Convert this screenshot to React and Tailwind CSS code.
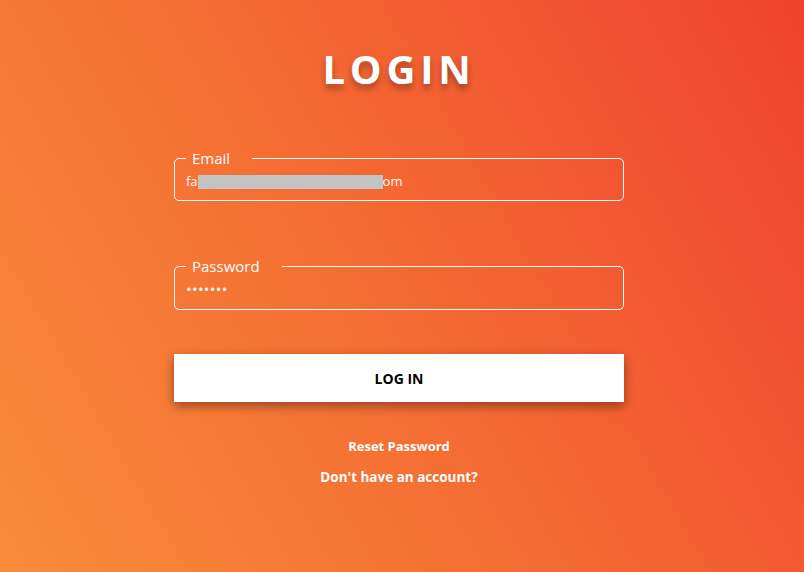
export default function App() {
  return (
    <div className="flex h-[572px] w-full flex-col items-center bg-[linear-gradient(60deg,#f88c39_0%,#f46a33_50%,#ef422e_100%)] pr-[6px] font-['Open_Sans',sans-serif] text-white">
      <h1 className="mt-[44px] text-[40px] leading-[50px] font-bold tracking-[0.12em] [text-shadow:0_5px_6px_rgba(0,0,0,0.3)]">
        LOGIN
      </h1>

      <form className="mt-[55px] flex w-[450px] flex-col">
        <fieldset className="rounded-[5px] border border-white px-[11px] pb-[7px]">
          <legend className="pr-[22px] pl-[6px] text-[15px] leading-[18px]">Email</legend>
          <div className="flex h-[26px] items-center pt-[3px] text-[13px]">
            <span>fa</span>
            <span className="h-[14px] w-[185px] bg-[#c3c3c3]" />
            <span>om</span>
          </div>
        </fieldset>

        <fieldset className="mt-[56px] rounded-[5px] border border-white px-[11px] pb-[8px]">
          <legend className="pr-[22px] pl-[6px] text-[15px] leading-[18px]">Password</legend>
          <input
            type="password"
            defaultValue="1234567"
            className="h-[26px] w-full bg-transparent pt-[2px] text-[15px] tracking-[0.02em] text-white outline-none"
          />
        </fieldset>

        <button
          type="button"
          className="mt-[44px] h-[48px] w-full bg-white text-[14px] font-bold text-black shadow-[0_4px_10px_rgba(0,0,0,0.4)]"
        >
          LOG IN
        </button>
      </form>

      <a className="mt-[35px] text-[13px] leading-[18px] font-bold">Reset Password</a>
      <a className="mt-[13px] text-[13.5px] leading-[18px] font-bold">Don't have an account?</a>
    </div>
  );
}
